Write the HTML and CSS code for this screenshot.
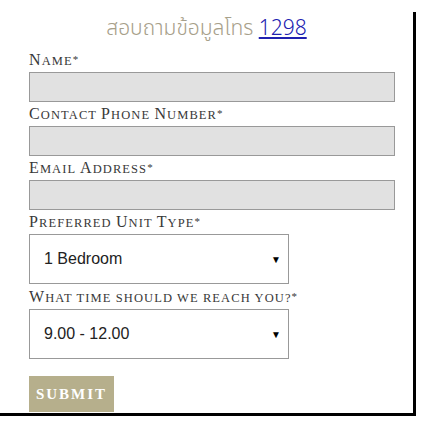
FILE: index.html
```html
<!DOCTYPE html>
<html>
<head>
<meta charset="utf-8">
<link rel="stylesheet" href="styles.css">
</head>
<body>
<div class="panel">
  <h2 class="title">สอบถามข้อมูลโทร <a href="#" class="tel">1298</a></h2>
  <form class="form">
    <div class="field">
      <label class="label"><span class="cap">N</span>ame<span class="req">*</span></label>
      <div class="input"></div>
    </div>
    <div class="field">
      <label class="label"><span class="cap">C</span>ontact <span class="cap">P</span>hone <span class="cap">N</span>umber<span class="req">*</span></label>
      <div class="input"></div>
    </div>
    <div class="field">
      <label class="label"><span class="cap">E</span>mail <span class="cap">A</span>ddress<span class="req">*</span></label>
      <div class="input"></div>
    </div>
    <div class="field">
      <label class="label"><span class="cap">P</span>referred <span class="cap">U</span>nit <span class="cap">T</span>ype<span class="req">*</span></label>
      <div class="select"><span>1 Bedroom</span><span class="arrow">▼</span></div>
    </div>
    <div class="field">
      <label class="label"><span class="cap">W</span>hat time should we reach you?<span class="req">*</span></label>
      <div class="select"><span>9.00 - 12.00</span><span class="arrow">▼</span></div>
    </div>
    <div class="actions">
      <span class="submit">Submit</span>
    </div>
  </form>
</div>
</body>
</html>
```
FILE: styles.css
```css
html, body {
  margin: 0;
  padding: 0;
  background: #fff;
}
.panel {
  box-sizing: border-box;
  width: 416px;
  margin-top: 12px;
  border-right: 3px solid #000;
  border-bottom: 3px solid #000;
  padding: 2px 18px 1px 29px;
}
.title {
  margin: 0 -18px 0 -29px;
  text-align: center;
  font-family: "Noto Sans Thai", "Noto Sans", "DejaVu Sans", sans-serif;
  font-weight: 300;
  font-size: 21px;
  line-height: 30px;
  color: #a7a08a;
}
.tel {
  color: #2020b0;
  text-decoration: underline;
}
.form {
  display: flex;
  flex-direction: column;
  margin-top: 4px;
}
.field {
  display: flex;
  flex-direction: column;
}
.label {
  display: block;
  height: 18px;
  font-family: "Liberation Serif", serif;
  text-transform: uppercase;
  font-size: 12.5px;
  line-height: 18px;
  letter-spacing: 1.1px;
  color: #383838;
  margin: 4px 0 2px;
  white-space: nowrap;
}
.cap {
  font-size: 16px;
  line-height: 1;
}
.req {
  font-size: 11px;
  line-height: 1;
  vertical-align: 2px;
  letter-spacing: 0;
}
.input {
  height: 28px;
  border: 1px solid #999;
  background: #e1e1e1;
}
.select {
  box-sizing: border-box;
  width: 260px;
  height: 50px;
  border: 1px solid #999;
  background: #fff;
  display: flex;
  align-items: center;
  justify-content: space-between;
  padding: 0 7px 0 14px;
  font-family: "Liberation Sans", Arial, sans-serif;
  font-size: 16px;
  color: #222;
  margin-bottom: 1px;
}
.arrow {
  font-size: 10px;
  color: #000;
}
.actions {
  margin-top: 16px;
}
.submit {
  display: inline-block;
  width: 85px;
  height: 36px;
  box-sizing: border-box;
  background: #b6af8c;
  color: #fff;
  font-family: "Liberation Serif", serif;
  font-weight: bold;
  font-size: 15px;
  letter-spacing: 2px;
  text-transform: uppercase;
  line-height: 36px;
  text-align: center;
  vertical-align: top;
}
```
